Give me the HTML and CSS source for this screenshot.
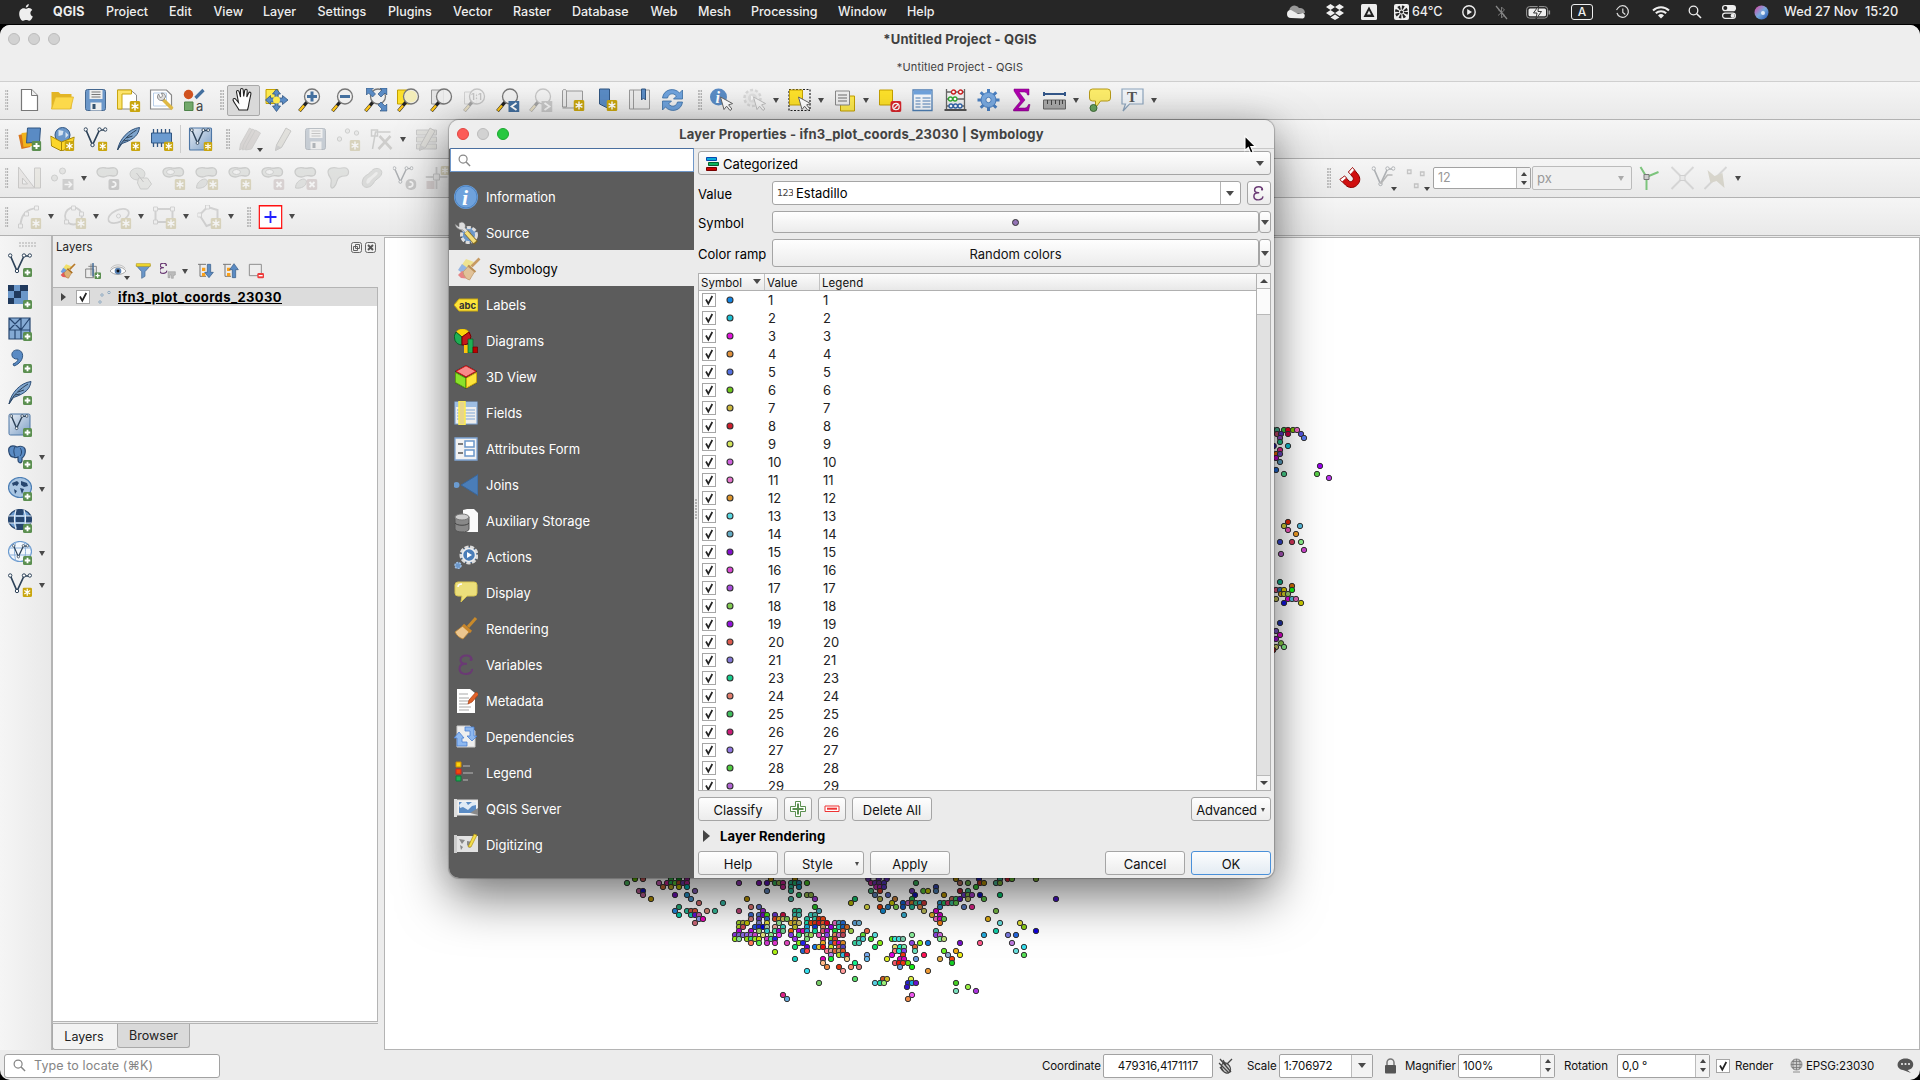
FILE: index.html
```html
<!DOCTYPE html>
<html lang="en">
<head>
<meta charset="utf-8">
<title>*Untitled Project - QGIS</title>
<link rel="stylesheet" href="styles.css">
</head>
<body>
<svg class="defs" width="0" height="0">
<defs>
<linearGradient id="gb" x1="0" y1="0" x2="1" y2="1"><stop offset="0" stop-color="#e8eef5"/><stop offset="1" stop-color="#7d9fc6"/></linearGradient>
<linearGradient id="gs" x1="0" y1="0" x2="1" y2="1"><stop offset="0" stop-color="#e040a0"/><stop offset=".5" stop-color="#7ad"/><stop offset="1" stop-color="#2050b0"/></linearGradient>
<symbol id="plus" viewBox="0 0 9 9"><rect width="9" height="9" rx="1.5" fill="#5b8f50"/><path d="M4.5 1.7v5.6M1.7 4.5h5.6" stroke="#fff" stroke-width="1.8"/></symbol>
<symbol id="star" viewBox="0 0 9 9"><rect width="9" height="9" rx="1.5" fill="#c9a60f"/><path d="M4.5 1.3v6.4M1.7 2.9l5.6 3.2M7.3 2.9L1.7 6.1" stroke="#fff" stroke-width="1.2"/></symbol>
<symbol id="lens" viewBox="0 0 24 24"><path d="M9.5 14L2 23" stroke="#222" stroke-width="3.4"/><path d="M6.5 17.5L2.2 22.7" stroke="#fcc419" stroke-width="2.4"/><circle cx="14.5" cy="8.500" r="7.500" fill="#eee" fill-opacity=".85" stroke="#777" stroke-width="1.3"/></symbol>
<symbol id="blob" viewBox="0 0 24 24"><path d="M1.500 6c0-4 5-5 9-4 3 1 6-1 9 0 4 2 3 8-1 8-3 0-4-1-7 0C8 12 2 11 1.500 6z" fill="#c0c6bd" stroke="#858b84" stroke-width="1.300"/></symbol>
<symbol id="vee" viewBox="0 0 24 24"><path d="M2.500 3L9 18 16 3h5" fill="none" stroke="#2d4258" stroke-width="1.700"/><g fill="#fff" stroke="#2d4258" stroke-width="1"><circle cx="2.200" cy="2.500" r="1.700"/><circle cx="9" cy="18" r="1.700"/><circle cx="16" cy="2.500" r="1.700"/><circle cx="21.800" cy="2.500" r="1.700"/></g></symbol>
<symbol id="arrow" viewBox="0 0 24 24"><path d="M11 9l3.500 12.500 2.600-3.300 3.400 4.300 1.900-1.500-3.300-4.200 4-1.200z" fill="#fff" stroke="#666" stroke-width="1"/></symbol>
<symbol id="eps" viewBox="0 0 24 24"><path d="M17.500 7c.3-3-2-4.500-5-4.500-4 0-6 2-6 4.500 0 2.300 2 3.800 5 3.800h1.500M13 10.800h-1.500c-4 0-6 2.200-6 5 0 3.200 2.500 5.200 6.500 5.200 3.500 0 6.500-2 6-5" fill="none" stroke="#6a3a74" stroke-width="2.100"/><circle cx="17" cy="6.500" r="1.500" fill="#6a3a74"/></symbol>
<symbol id="feather" viewBox="0 0 24 24"><path d="M1 23C3 12 12 2 23 .5 22 7 19 12 5.500 16.500z" fill="#7fa5cd" stroke="#2d4f78"/><path d="M1 23C5 14 12 8 20 3M7 14l5-1M10 11l6-2" stroke="#2d4258" fill="none"/></symbol>
<symbol id="brush" viewBox="0 0 24 24"><path d="M22.500 1.500l-8 8" stroke="#b87a2a" stroke-width="2.600"/><path d="M6 15l6-6.500 6 5.500-5.500 9C9 22 7 19 6 15z" fill="#ddb276" stroke="#b07a35" stroke-width=".8"/><path d="M11 8.500l7.500 6.500" stroke="#a66a1c" stroke-width="2"/></symbol>
<symbol id="pencil" viewBox="0 0 24 24"><path d="M6 18L15.500 1l5 3L11 20.500 5 23.500z" fill="#c9c5a8" stroke="#7d7b73"/><path d="M6 18l5 2.500-6 3z" fill="#999"/></symbol>
<symbol id="check" viewBox="0 0 14 14"><rect x=".5" y=".5" width="13" height="13" fill="#fff" stroke="#a6a6a6"/><path d="M4 6.500l2.300 4.200L10.300 3" fill="none" stroke="#222" stroke-width="1.700"/></symbol>
<symbol id="mag" viewBox="0 0 14 14"><circle cx="5.500" cy="5.500" r="4.300" fill="none" stroke="currentColor" stroke-width="1.300"/><path d="M8.700 8.700L13 13" stroke="currentColor" stroke-width="1.600"/></symbol>

<symbol id="new" viewBox="0 0 24 24"><path d="M4 1.500h10l6 6v15H4z" fill="#fff" stroke="#777" stroke-width="1.200"/><path d="M14 1.500v6h6" fill="#eee" stroke="#777"/></symbol>
<symbol id="open" viewBox="0 0 24 24"><path d="M1 21V4h7l2 2h11v15z" fill="#e3b524"/><path d="M1 21L5 9h18l-3 12z" fill="#fcd94b" stroke="#e0b52a" stroke-width=".8"/></symbol>
<symbol id="save" viewBox="0 0 24 24"><rect x="2" y="1.500" width="20" height="21" rx="2" fill="#6b97c9" stroke="#44678f"/><path d="M6 2h13v9H6z" fill="#eee"/><path d="M8 4h9M8 6.500h9M8 9h9" stroke="#777"/><path d="M7 14.500h11v8H7z" fill="#eee"/><path d="M9 16h3v5H9z" fill="#34526e"/></symbol>
<symbol id="layout" viewBox="0 0 24 24"><path d="M1 2h13l6 5v14H1z" fill="#fff" stroke="#888"/><path d="M1 2h14v4H5.500v15H1z" fill="#fce36a" stroke="#c9a60f"/><use href="#star" x="13" y="13" width="11" height="11"/></symbol>
<symbol id="lman" viewBox="0 0 24 24"><path d="M1 2h16l5 5v14H1z" fill="#fff" stroke="#888" stroke-width="1.200"/><path d="M4 5h13v13H4z" fill="none" stroke="#b9cfe8"/><path d="M13 11l10 10" stroke="#dfb944" stroke-width="3.600"/><path d="M9 6c-3 4 1 8 5 6l2-3c0-2-1-4-4-4l1 3-2 2z" fill="#ddd" stroke="#777" stroke-width=".8"/></symbol>
<symbol id="sman" viewBox="0 0 24 24"><circle cx="6" cy="6.500" r="4.700" fill="#d0521f"/><path d="M13 10L21 2" stroke="#44709f" stroke-width="3.200"/><path d="M2 14h8.500v8.500H2z" fill="#72a86b" stroke="#4d8348"/><text x="13.500" y="22.500" font-size="13" font-family="Inter" fill="#444">a</text></symbol>
<symbol id="hand" viewBox="0 0 24 24"><path d="M8 22C6 18 3 15 2 12c0-2 2-2 3-.5l2.500 3L5.500 4c0-2 2.200-2 2.700 0L9.500 9V2c0-2 2.500-2 2.700 0l.5 6.500 1-6c.5-2 2.600-1.500 2.500.5L15.800 9l1.800-4c1-1.500 2.700-.7 2.300 1L18 15c-.3 3-.7 4-1.500 7z" fill="#fff" stroke="#222" stroke-width="1.100"/></symbol>
<symbol id="pansel" viewBox="0 0 24 24"><path d="M1.500 1.500h12v14h-12z" fill="#fce94f" stroke="#c4a000"/><path d="M12 1l4 5h-2.500v4H18V7.500L23.500 12 18 16.500V14h-4.500v4H16l-4 5.500L8 18h2.500v-4H6v2.500L1 12l5-4.500V10h4.500V6H8z" fill="#5a8bc4" stroke="#315682" stroke-width=".8"/><circle cx="12" cy="12" r="3.500" fill="#fce94f"/></symbol>
<symbol id="zin" viewBox="0 0 24 24"><use href="#lens"/><path d="M14.500 3.500v10M9.500 8.500h10" stroke="#44709f" stroke-width="3"/></symbol>
<symbol id="zout" viewBox="0 0 24 24"><use href="#lens"/><path d="M9.500 8.500h10" stroke="#44709f" stroke-width="3"/></symbol>
<symbol id="zfull" viewBox="0 0 24 24"><use href="#lens"/><path d="M3 0h7L8 2l4 4-3 3-4-4-2 2zM23.500 0h-7l2 2-4 4 3 3 4-4 2 2zM23.500 23h-7l2-2-4-4 3-3 4 4 2-2z" fill="#5a8bc4" stroke="#315682" stroke-width=".7"/></symbol>
<symbol id="zsel" viewBox="0 0 24 24"><path d="M1 2h12v14H1z" fill="#fce02a" stroke="#c4a000"/><use href="#lens"/><circle cx="14.500" cy="8.500" r="6" fill="#f3edb9"/></symbol>
<symbol id="zlay" viewBox="0 0 24 24"><path d="M2 2h12v14H2z" fill="#e5e5e5" stroke="#999"/><use href="#lens"/></symbol>
<symbol id="znat" viewBox="0 0 24 24"><path d="M2 4h12v12H2z" fill="#eee" stroke="#999"/><use href="#lens"/><text x="8.500" y="12" font-size="9" font-weight="700" font-family="Inter" fill="#777">1:1</text></symbol>
<symbol id="zlast" viewBox="0 0 24 24"><use href="#lens"/><path d="M13 13h11v11H13z" fill="#44709f"/><path d="M21 15l-5 3.500 5 3.500" fill="none" stroke="#fff" stroke-width="1.800"/></symbol>
<symbol id="znext" viewBox="0 0 24 24"><use href="#lens"/><path d="M13 13h11v11H13z" fill="#888"/><path d="M16 15l5 3.500-5 3.500" fill="none" stroke="#fff" stroke-width="1.800"/></symbol>
<symbol id="mapv" viewBox="0 0 24 24"><path d="M1 3c0-2 4-2 4 0v16H1zM5 3h16v17H1" fill="#e9e9e9" stroke="#999"/><use href="#star" x="12" y="12" width="11" height="11"/></symbol>
<symbol id="bmk" viewBox="0 0 24 24"><path d="M5 1h10v20l-10-5z" fill="#5a8bc4" stroke="#315682"/><use href="#star" x="12" y="12" width="11" height="11"/></symbol>
<symbol id="book" viewBox="0 0 24 24"><path d="M2 2h20v19H2z" fill="#e9e9e9" stroke="#999"/><path d="M6 2v19" stroke="#999"/><path d="M14 1h4v11l-2-2-2 2z" fill="#5a8bc4" stroke="#315682"/></symbol>
<symbol id="refresh" viewBox="0 0 24 24"><path d="M2 10C3 1 14-1 19 5l3-3v9h-9l3-3c-4-4-8-2-9 2zM22 14c-1 9-12 11-17 5l-3 3v-9h9l-3 3c4 4 8 2 9-2z" fill="#6fa2dc" stroke="#3a6ea5" stroke-width=".8"/></symbol>
<symbol id="ident" viewBox="0 0 24 24"><circle cx="9" cy="9" r="8.500" fill="#5a8bc4"/><text x="6" y="15" font-size="16" font-style="italic" font-weight="700" font-family="Liberation Serif" fill="#fff">i</text><use href="#arrow"/></symbol>
<symbol id="gearg" viewBox="0 0 24 24"><circle cx="10" cy="10" r="8" fill="#e2e2e2" stroke="#aaa" stroke-width="2.500" stroke-dasharray="3 2"/><circle cx="10" cy="10" r="4.500" fill="#bbb"/><path d="M8.500 7.500v5l4-2.500z" fill="#fff"/><use href="#arrow"/></symbol>
<symbol id="select" viewBox="0 0 24 24"><path d="M1.500 1.500h21v21h-21z" fill="none" stroke="#222" stroke-width="1.200" stroke-dasharray="2 1.500"/><path d="M2 2h13v15H2z" fill="#fce02a" stroke="#c4a000"/><use href="#arrow"/></symbol>
<symbol id="selval" viewBox="0 0 24 24"><path d="M8 8h14v15H8z" fill="#fce94f" stroke="#c4a000"/><path d="M3 3h14v14H3z" fill="#eee" stroke="#888"/><path d="M5.500 7h9M5.500 10h9M5.500 13h9" stroke="#999" stroke-width="1.300"/></symbol>
<symbol id="desel" viewBox="0 0 24 24"><path d="M2 2h13v15H2z" fill="#fce02a" stroke="#c4a000"/><rect x="13" y="13" width="11" height="11" rx="2" fill="#d9272d"/><circle cx="18.500" cy="18.500" r="3.200" fill="none" stroke="#fff" stroke-width="1.300"/><path d="M16.500 20.500l4-4" stroke="#fff" stroke-width="1.300"/></symbol>
<symbol id="table" viewBox="0 0 24 24"><path d="M2.500 2h19v20.500h-19z" fill="#f5f8fc" stroke="#4f7fb5" stroke-width="1.300"/><path d="M3 2.500h18v4H3z" fill="#6fa2dc"/><path d="M5 10h5M12 10h8M5 13h5M12 13h8M5 16h5M12 16h8M5 19h5M12 19h8" stroke="#4f7fb5" stroke-width="1.200"/></symbol>
<symbol id="abacus" viewBox="0 0 24 24"><path d="M3 1v21M21 1v21M3 4h18M3 11h18M3 18h18" stroke="#666" stroke-width="1.300"/><path d="M1 22h22" stroke="#555" stroke-width="2.200"/><g stroke-width="1.300" fill="#fff"><g stroke="#c22"><circle cx="10" cy="4" r="2"/><circle cx="17" cy="4" r="2"/></g><g stroke="#3a3"><circle cx="7" cy="11" r="2"/><circle cx="11.500" cy="11" r="2"/></g><g stroke="#36a"><circle cx="7.500" cy="18" r="2"/><circle cx="12" cy="18" r="2"/><circle cx="16.500" cy="18" r="2"/></g></g></symbol>
<symbol id="gear" viewBox="0 0 24 24"><g stroke="#4a7fc0" stroke-width="3"><path d="M12 1v22M1 12h22M4.200 4.200l15.600 15.600M19.800 4.200L4.200 19.800"/></g><circle cx="12" cy="12" r="7.500" fill="#7aa9df" stroke="#4a7fc0"/><circle cx="12" cy="12" r="2.700" fill="#f2f2f2" stroke="#4a7fc0"/></symbol>
<symbol id="sigma" viewBox="0 0 24 24"><path d="M4.500 1h15v6H18c-.5-2.500-2-3-4-3H9.500l6 8-7 8H15c2 0 3-1 4-3.500h1.500L19 23H4v-1.500L11 13 4.500 3z" fill="#b000b0" stroke="#700070" stroke-width=".5"/></symbol>
<symbol id="measure" viewBox="0 0 24 24"><path d="M1.500 6h21M1.500 4v4M22.500 4v4" stroke="#34588a" stroke-width="2"/><path d="M1 12h22v9H1z" fill="#aaa" stroke="#666"/><path d="M5 12v4M9 12v5M13 12v4M17 12v5M20 12v4" stroke="#444"/></symbol>
<symbol id="tip" viewBox="0 0 24 24"><path d="M5 1h15q3 0 3 3v6q0 3-3 3h-7l-5 7v-7H5q-3 0-3-3V4q0-3 3-3z" fill="#fcec6a" stroke="#b79b1b"/><circle cx="6" cy="20" r="3.500" fill="#6aa460" stroke="#3f6d38"/></symbol>
<symbol id="tann" viewBox="0 0 24 24"><path d="M1.500 1h21v15H9l-6.500 7L5 16H1.500z" fill="#eff3f7" stroke="#8da5bd" stroke-width="1.200"/><text x="6.500" y="14" font-size="15" font-weight="700" font-family="Liberation Serif" fill="#555">T</text></symbol>

<symbol id="dsrc" viewBox="0 0 24 24"><path d="M1 8l9-2 3 14-9 2z" fill="#d9761c"/><path d="M4 6l10-1 1 14-9 1z" fill="#f1b41d"/><path d="M10 1h13l-1 14-13 1z" fill="#5a8bc4" stroke="#315682"/><use href="#plus" x="14" y="14" width="10" height="10"/></symbol>
<symbol id="gpkg" viewBox="0 0 24 24"><circle cx="12" cy="8" r="7.500" fill="#6b97c9" stroke="#315682"/><path d="M8 3l5 1-1 4-4 1zM15 5l3 3-3 3z" fill="#d5e3f1"/><path d="M0 9l11 6 13-5-2 10-11 4-10-5z" fill="#fcd62a" stroke="#a5850a"/><path d="M11 15v9" stroke="#a5850a"/><use href="#star" x="14" y="14" width="10" height="10"/></symbol>
<symbol id="shp" viewBox="0 0 24 24"><use href="#vee"/><use href="#star" x="14.500" y="14.500" width="9.500" height="9.500"/></symbol>
<symbol id="spl" viewBox="0 0 24 24"><use href="#feather"/><use href="#star" x="14.500" y="14.500" width="9.500" height="9.500"/></symbol>
<symbol id="mem" viewBox="0 0 24 24"><path d="M4 2v18M8 2v18M12 2v18M16 2v18M20 2v18" stroke="#315682" stroke-width="1.300"/><path d="M2 6h20v10H2z" fill="#6b9bd0" stroke="#315682"/><use href="#star" x="14.500" y="14.500" width="9.500" height="9.500"/></symbol>
<symbol id="virt" viewBox="0 0 24 24"><rect x="1" y="1" width="22" height="22" rx="1" fill="url(#gb)" stroke="#4d76a5" stroke-width="1.200"/><use href="#vee" x="1.500" y="1" width="20" height="20"/><use href="#star" x="15" y="15" width="9" height="9"/></symbol>
<symbol id="edits" viewBox="0 0 24 24"><g fill="#b9a59c" stroke="#8d8a82" stroke-width=".8"><path d="M3 17L12 1l5 3L8 20l-6 3z"/><path d="M6 18L15 2l5 3-9 16-6 2z"/><path d="M9 19l9-16 5 3-9 16-6 1z"/></g></symbol>
<symbol id="points" viewBox="0 0 24 24"><g fill="#d8dbd7" stroke="#8d938c"><circle cx="3" cy="12" r="2.200"/><circle cx="11" cy="4" r="2.200"/><circle cx="20" cy="6" r="2.200"/></g><use href="#star" x="13" y="13" width="11" height="11"/></symbol>
<symbol id="vertex" viewBox="0 0 24 24"><path d="M3 22L6 5h15M2 3h6v6H2z" fill="none" stroke="#8d938c" stroke-width="1.500"/><path d="M9 22L21 9M10 9l12 13" stroke="#9a958a" stroke-width="2.600"/></symbol>
<symbol id="multi" viewBox="0 0 24 24"><path d="M2 3h20v5H2zM2 10h20v5H2zM2 17h20v5H2z" fill="#c8c8b0" stroke="#888"/><use href="#pencil"/></symbol>
<symbol id="rulr" viewBox="0 0 24 24"><path d="M1 1l16 21H1z" fill="#ddd3cb" stroke="#8d8680"/><path d="M5 12v6h5z" fill="#eee" stroke="#8d8680"/><path d="M17 2h6v20h-6z" fill="#ddd9b8" stroke="#8d8680"/></symbol>
<symbol id="movef" viewBox="0 0 24 24"><g fill="#c9cdc6" stroke="#8d938c"><circle cx="4" cy="12" r="3"/><circle cx="12" cy="5" r="3"/></g><path d="M12 13h11v11H12z" fill="#999"/><path d="M14 18.500h6M18 15.500l3 3-3 3" stroke="#fff" stroke-width="1.500" fill="none"/></symbol>
<symbol id="bl1" viewBox="0 0 24 24"><use href="#blob"/><rect x="13" y="13" width="11" height="11" rx="2" fill="#888"/><path d="M16 21c6 0 5-6 1-5" stroke="#fff" stroke-width="1.800" fill="none"/></symbol>
<symbol id="bl2" viewBox="0 0 24 24"><ellipse cx="9" cy="8" rx="7.500" ry="6" fill="#c0c6bd" stroke="#8d938c"/><path d="M10 12h9l4 6-4 5h-7l-3-6z" fill="#d4d6c6" stroke="#8d938c"/><path d="M8 7l7 9" stroke="#777"/></symbol>
<symbol id="bl3" viewBox="0 0 24 24"><use href="#blob"/><ellipse cx="9" cy="6" rx="4" ry="2.500" fill="#eee" stroke="#8d938c"/><use href="#star" x="13" y="13" width="11" height="11"/></symbol>
<symbol id="bl4" viewBox="0 0 24 24"><use href="#blob"/><path d="M2 22c0-5 4-9 9-9l2 2c0 5-5 8-11 7z" fill="#c0c6bd" stroke="#8d938c"/><use href="#star" x="13" y="13" width="11" height="11"/></symbol>
<symbol id="bl5" viewBox="0 0 24 24"><use href="#blob"/><ellipse cx="9" cy="6" rx="4" ry="2.500" fill="#eee" stroke="#8d938c"/><rect x="13" y="13" width="11" height="11" rx="2" fill="#c99a9a"/><path d="M16 16l5 5M21 16l-5 5" stroke="#fff" stroke-width="1.800"/></symbol>
<symbol id="bl6" viewBox="0 0 24 24"><use href="#blob"/><path d="M2 22c0-5 4-9 9-9l2 2c0 5-5 8-11 7z" fill="#c0c6bd" stroke="#8d938c"/><rect x="13" y="13" width="11" height="11" rx="2" fill="#c99a9a"/><path d="M16 16l5 5M21 16l-5 5" stroke="#fff" stroke-width="1.800"/></symbol>
<symbol id="bl7" viewBox="0 0 24 24"><path d="M1.500 6c0-4 5-5 9-4 3 1 6-1 9 0 4 2 3 8-1 8-4 0-7 1-8 5-1 5-5 9-6 6-1-2 1-5 0-8-1-2-3-4-3-7z" fill="#c0c6bd" stroke="#8d938c" stroke-width="1.200"/></symbol>
<symbol id="bl8" viewBox="0 0 24 24"><path d="M3 15c1-6 5-5 9-10 4-5 12-2 10 3-1 4-5 4-8 9-4 7-13 5-11-2z" fill="#b5bab2" stroke="#8d938c"/><path d="M7 15c1-4 4-3 8-8 2-2 4-1 3 1-2 3-4 3-7 7-2 4-5 3-4 0z" fill="#e4e6df"/></symbol>
<symbol id="bl9" viewBox="0 0 24 24"><use href="#vee" width="21" height="21"/><rect x="13" y="13" width="11" height="11" rx="5" fill="#888"/><path d="M16 21c6 0 5-6 1-5" stroke="#fff" stroke-width="1.800" fill="none"/></symbol>
<symbol id="bl10" viewBox="0 0 24 24"><path d="M0 11h22M11 1v22" stroke="#999" stroke-width="1.800"/><path d="M8 8h6v6H8z" fill="#ddd" stroke="#888"/><use href="#star" x="15" y="0" width="9" height="9"/><rect x="1" y="15" width="8" height="8" fill="#c99a9a"/></symbol>
<symbol id="s1" viewBox="0 0 24 24"><path d="M3 22C3 10 8 4 20 3" fill="none" stroke="#9a9a9a" stroke-width="2"/><path d="M7 7h4v4H7zM17 1h4v4h-4zM1 19h4v4H1z" fill="#eee" stroke="#999"/><use href="#star" x="13" y="13" width="11" height="11"/></symbol>
<symbol id="s2" viewBox="0 0 24 24"><circle cx="11" cy="11" r="8.500" fill="#eee" stroke="#9a9a9a" stroke-width="1.800"/><path d="M9 1h4v4H9zM2 15h4v4H2zM17 7h4v4h-4z" fill="#eee" stroke="#999"/><use href="#star" x="13" y="13" width="11" height="11"/></symbol>
<symbol id="s3" viewBox="0 0 24 24"><ellipse cx="11" cy="11" rx="11" ry="6" transform="rotate(-25 11 11)" fill="#eee" stroke="#9a9a9a" stroke-width="1.800"/><circle cx="11" cy="11" r="2" fill="#eee" stroke="#999"/><use href="#star" x="13" y="13" width="11" height="11"/></symbol>
<symbol id="s4" viewBox="0 0 24 24"><path d="M3 4h17v13H3z" fill="#eee" stroke="#9a9a9a" stroke-width="2"/><path d="M1 2h4v4H1zM18 2h4v4h-4zM1 15h4v4H1z" fill="#eee" stroke="#999"/><use href="#star" x="13" y="13" width="11" height="11"/></symbol>
<symbol id="s5" viewBox="0 0 24 24"><path d="M2 10l8-8 10 3v12l-11 4z" fill="#eee" stroke="#9a9a9a" stroke-width="2"/><path d="M8 0h4v4H8zM0 8h4v4H0z" fill="#eee" stroke="#999"/><use href="#star" x="13" y="13" width="11" height="11"/></symbol>
<symbol id="redx" viewBox="0 0 24 24"><path d="M.7.700h22.600v22.600H.7z" fill="#fff" stroke="#f11" stroke-width="1.500"/><path d="M12 6v12M6 12h12" stroke="#22f" stroke-width="1.800"/></symbol>
<symbol id="magnet" viewBox="0 0 24 24"><path d="M1.500 13.500L6 10l4.500 5c2 2 5.500-1 4-3.500L10 6l4-4.500 6 7.500c5 8-6 17-13 10z" fill="#d01010" stroke="#800"/><path d="M1.500 13.500L6 10l2 2-4.500 4zM10 6l4-4.500 2 2.500-4 4.500z" fill="#fff" stroke="#a22" stroke-width=".8"/></symbol>
<symbol id="veeg" viewBox="0 0 24 24"><use href="#vee" width="24" height="24"/><path d="M9 18L16 9h5" stroke="#555" fill="none" stroke-width="1.500"/></symbol>
<symbol id="pts3" viewBox="0 0 24 24"><g fill="#eee" stroke="#777" stroke-width="1.300"><path d="M3 4h3.500v3.500H3zM16 6h3.500v3.500H16zM10 18h3.500v3.500H10z"/></g></symbol>
<symbol id="topo" viewBox="0 0 24 24"><path d="M3 1l6 10 12-5M9 11v13" fill="none" stroke="#7cc47c" stroke-width="2"/><path d="M6.500 8.500h5v5h-5z" fill="#ccc" stroke="#777"/></symbol>
<symbol id="cross" viewBox="0 0 24 24"><path d="M1 1l22 22M23 1L1 23" stroke="#aaa" stroke-width="2"/><path d="M9.500 9.500h5v5h-5z" fill="#ddd" stroke="#999"/></symbol>
<symbol id="trace" viewBox="0 0 24 24"><path d="M23 1L1 23" stroke="#aaa" stroke-width="2"/><path d="M4 4l7 6 8-3 2 15-8-7-6 2z" fill="#b6a868"/></symbol>

<symbol id="lv" viewBox="0 0 24 24"><use href="#vee"/><use href="#plus" x="15" y="15" width="9" height="9"/></symbol>
<symbol id="lr" viewBox="0 0 24 24"><path d="M0 0h20v19H0z" fill="#6b97c9"/><path d="M0 0h6v6H0zM12 0h8v6h-8zM6 6h7v7H6zM0 13h6v6H0z" fill="#20395c"/><use href="#plus" x="15" y="15" width="9" height="9"/></symbol>
<symbol id="lm" viewBox="0 0 24 24"><path d="M1 1h21v21H1zM1 13h21M13 1v12M7 13v9M13 13v9M1 1l12 12M13 1L1 13M22 1l-9 12" fill="#84aad4" stroke="#27466f" stroke-width="1.200"/><use href="#plus" x="15" y="15" width="9" height="9"/></symbol>
<symbol id="lc" viewBox="0 0 24 24"><path d="M9 1c8 0 8 12-3 16l-1-2c3-1 5-3 5-5-8 1-8-9-1-9z" fill="#5a8bc4" stroke="#315682"/><use href="#plus" x="15" y="15" width="9" height="9"/></symbol>
<symbol id="lf" viewBox="0 0 24 24"><use href="#feather"/><use href="#plus" x="15" y="15" width="9" height="9"/></symbol>
<symbol id="lx" viewBox="0 0 24 24"><rect x="1" y="1" width="21" height="21" rx="1.500" fill="url(#gb)" stroke="#4d76a5"/><use href="#vee" x="1.500" y="1" width="19" height="19"/><use href="#plus" x="15" y="15" width="9" height="9"/></symbol>
<symbol id="lp" viewBox="0 0 24 24"><path d="M1 3c2-3 6-2 8-1 3-1 7-1 8 2 1 4-1 8-3 9v3c-1 3-4 2-4-1v-3c-2 1-3 1-4 0-4 1-6-5-5-9z" fill="#5a8bc4" stroke="#27466f" stroke-width="1.200"/><path d="M7 2c-2 3-1 7 0 9M12 3c2 2 2 6 0 8" stroke="#27466f" fill="none"/><use href="#plus" x="15" y="15" width="9" height="9"/></symbol>
<symbol id="lw" viewBox="0 0 24 24"><ellipse cx="12" cy="10.500" rx="11.500" ry="10" fill="#a9c6e3" stroke="#4d7fb5" stroke-width="1.200"/><path d="M4 6l5-2 2 2-2 3-2-1-2 1zM13 4l6 2 1 3-4 1-3-2zM12 11l4 1-2 5zM6 12l3 2-2 3z" fill="#27466f"/><use href="#plus" x="15" y="15" width="9" height="9"/></symbol>
<symbol id="lg" viewBox="0 0 24 24"><ellipse cx="12" cy="10.500" rx="11.500" ry="10" fill="#6b9bd0" stroke="#27466f" stroke-width="1.200"/><path d="M1 7h6v7H1zM17 7h6v7h-6zM8 1h8l-1 5H8zM8 15h8l-1 5H9z" fill="#27466f"/><path d="M8 8h8v5H8z" fill="#27466f"/><path d="M1 7h22M1 14h22M8 1c-2 6-2 13 0 19M16 1c2 6 2 13 0 19" fill="none" stroke="#e2ecf6" stroke-width="1.200"/><use href="#plus" x="15" y="15" width="9" height="9"/></symbol>
<symbol id="lh" viewBox="0 0 24 24"><ellipse cx="12" cy="10.500" rx="11.500" ry="10" fill="#f4f8fc" stroke="#6b9bd0" stroke-width="1.200"/><path d="M1 7h22M1 14h22M8 1c-2 6-2 13 0 19M16 1c2 6 2 13 0 19" fill="none" stroke="#8db1da"/><use href="#vee" x="4" y="3" width="17" height="17"/><use href="#plus" x="15" y="15" width="9" height="9"/></symbol>

<symbol id="style" viewBox="0 0 24 24"><path d="M4 9l5-7 8 3-6 8z" fill="#f1e06a"/><path d="M1 13l4-6 7 5-4 6z" fill="#6f9fe0"/><path d="M1 18l4-4 6 2 3 6-10-1z" fill="#e4595a"/><use href="#brush"/></symbol>
<symbol id="addg" viewBox="0 0 24 24"><path d="M1 9h12v13H1zM5 5h12v13M9 1v18M12 1v20" fill="none" stroke="#777" stroke-width="1.300"/><path d="M12 0v20" stroke="#44709f" stroke-width="2"/><use href="#plus" x="14" y="14" width="10" height="10"/></symbol>
<symbol id="eye" viewBox="0 0 24 24"><path d="M0 12C6 4 18 4 24 12 18 19 6 19 0 12z" fill="#fff" stroke="#999" stroke-width="1.300"/><circle cx="12" cy="12" r="5" fill="#5a83b5"/><circle cx="12" cy="12" r="2.200" fill="#111"/><path d="M1 8C7 1 17 1 23 8" fill="none" stroke="#aaa"/></symbol>
<symbol id="funnel" viewBox="0 0 24 24"><path d="M2 4l8 9v10l5-3v-7l8-9z" fill="#6b97c9" stroke="#44678f"/><path d="M2 1h21v4H2z" fill="#f3dc30" stroke="#b79b1b"/></symbol>
<symbol id="epsf" viewBox="0 0 24 24"><use href="#eps" x="-5" y="-2" width="20" height="20"/><path d="M12 13h11v5l-3 1v4h-3v-5l-2 0v4h-3z" fill="#bbb" stroke="#888" stroke-width=".6"/></symbol>
<symbol id="expa" viewBox="0 0 24 24"><path d="M0 2h12M3 2v18h9" stroke="#777" stroke-width="1.500" fill="none"/><path d="M6 7h5v5H6zM6 15h5v5H6z" fill="#f9a01b"/><path d="M14 2h5v12h4l-6.500 8L10 14h4z" fill="#5a8bc4" stroke="#315682"/></symbol>
<symbol id="coll" viewBox="0 0 24 24"><path d="M0 2h12M3 2v18h9" stroke="#777" stroke-width="1.500" fill="none"/><path d="M6 7h5v5H6zM6 15h5v5H6z" fill="#f9a01b"/><path d="M14 22h5V10h4l-6.500-9L10 10h4z" fill="#5a8bc4" stroke="#315682"/></symbol>
<symbol id="remv" viewBox="0 0 24 24"><path d="M2 2h18v17H2z" fill="#eee" stroke="#888" stroke-width="1.400"/><rect x="14" y="15" width="10" height="8" rx="2" fill="#ee3b3b"/><path d="M16 19h6" stroke="#fff" stroke-width="2"/></symbol>

<symbol id="d1" viewBox="0 0 24 24"><circle cx="12" cy="12" r="12" fill="#6fa2dc"/><circle cx="12" cy="12" r="11" fill="none" stroke="#4d84c4"/><text x="8" y="20" font-size="22" font-style="italic" font-weight="700" font-family="Liberation Serif" fill="#fff">i</text></symbol>
<symbol id="d2" viewBox="0 0 24 24"><circle cx="15" cy="14" r="7.500" fill="#6b97c9" stroke="#ddd" stroke-width="3" stroke-dasharray="4 1.500"/><path d="M1 3l4 3V2L8 1c3 1 4 3 3 6l6 5-3 3-5-6c-4 0-7-2-8-6z" fill="#ddd" stroke="#777" stroke-width=".6"/><path d="M12 11l10 11" stroke="#7c6420" stroke-width="5"/><path d="M12 11l9 10" stroke="#f3dd7a" stroke-width="3.800"/></symbol>
<symbol id="d4" viewBox="0 0 24 24"><path d="M0 12l5-6h19v12H5z" fill="#fce43a" stroke="#c9a60f"/><text x="5" y="15.500" font-size="9.500" font-weight="700" font-family="Inter" fill="#333">abc</text></symbol>
<symbol id="d5" viewBox="0 0 24 24"><path d="M8 8L2 3a8 8 0 0113 0z" fill="#fcd40a" stroke="#a5850a" stroke-width=".6"/><path d="M8 8v8A8 8 0 012 3z" fill="#1fae54" stroke="#0a5c28"/><path d="M8 8l7-5a8 8 0 01-7 13z" fill="#c4181c" stroke="#700"/><path d="M10 16h4v8h-4z" fill="#fcc40a"/><path d="M14 10h5v14h-5z" fill="#1fae54" stroke="#0a5c28" stroke-width=".7"/><path d="M19 18h4.500v6H19z" fill="#b00" stroke="#600" stroke-width=".7"/></symbol>
<symbol id="d6" viewBox="0 0 24 24"><path d="M12 0l11 6v12l-11 6-11-6V6z" fill="#333"/><path d="M12 .8l10 5.500-10 5.500L2 6.300z" fill="#f88a8a" stroke="#d01515"/><path d="M1.500 7.500L11.500 13v10L1.500 17.500z" fill="#8ae22a" stroke="#58a010"/><path d="M22.500 7.500L12.500 13v10l10-5.500z" fill="#fce43a" stroke="#c9a60f"/></symbol>
<symbol id="d7" viewBox="0 0 24 24"><path d="M1 1h22v22H1z" fill="#eee" stroke="#7fa5d5" stroke-width="1.200"/><path d="M1 1h22v5H1z" fill="#9dbde2"/><path d="M3 9h18M3 12h18M3 15h18M3 18h18" stroke="#7fa5d5" stroke-width="1.200"/><path d="M5 0h6v24H5z" fill="#e8d68a" stroke="#fcec4f" stroke-width="1.500"/></symbol>
<symbol id="d8" viewBox="0 0 24 24"><path d="M1 1h22v22H1z" fill="#f2f2f2" stroke="#7fa5d5" stroke-width="1.300"/><path d="M11 4h9v6h-9zM11 13h9v6h-9z" fill="#fff" stroke="#6b97c9" stroke-width="1.500"/><path d="M4 7h5M4 16h5" stroke="#555" stroke-width="1.700"/></symbol>
<symbol id="d9" viewBox="0 0 24 24"><circle cx="2.500" cy="12" r="3" fill="#6b9bd0"/><path d="M24 1.500v21L7 12z" fill="#4a7db8" stroke="#3a6698"/></symbol>
<symbol id="d10" viewBox="0 0 24 24"><path d="M9 1l4-1h7l4 4v19H9z" fill="#fafafa"/><path d="M1 8v12c0 4 14 4 14 0V8z" fill="#888" stroke="#555"/><ellipse cx="8" cy="8" rx="7" ry="3" fill="#ccc" stroke="#777"/><path d="M1 14c2 3 12 3 14 0" stroke="#444" fill="none"/></symbol>
<symbol id="d11" viewBox="0 0 24 24"><circle cx="15" cy="10" r="8" fill="#4a7db8" stroke="#ddd" stroke-width="3" stroke-dasharray="4 1.500"/><circle cx="15" cy="10" r="6.500" fill="none" stroke="#eee" stroke-width="1.500"/><path d="M13 7v6l5-3z" fill="#fff"/><circle cx="4" cy="20.500" r="3" fill="#6b97c9" stroke="#9dbde2" stroke-width="1.500" stroke-dasharray="2 1"/></symbol>
<symbol id="d12" viewBox="0 0 24 24"><path d="M4 1h16q3 0 3 3v8q0 3-3 3h-7l-6 6 1-6H4q-3 0-3-3V4q0-3 3-3z" fill="#ecdf7b" stroke="#d8c552"/><path d="M4 6q0-3 4-3" stroke="#fff" stroke-width="1.500" fill="none"/></symbol>
<symbol id="d13" viewBox="0 0 24 24"><path d="M22 1l-8 9" stroke="#c98a2a" stroke-width="3"/><path d="M1 15l9-7 6 6-7 8c-3-1-6-3-8-7z" fill="#ecc68f" stroke="#b9802f" stroke-width=".8"/><path d="M9 8l8 7" stroke="#c9862a" stroke-width="3"/></symbol>
<symbol id="d15" viewBox="0 0 24 24"><path d="M3 0h13l5 4v20H3z" fill="#fff"/><path d="M5 5h9M5 9h10M5 12h11M5 15h9M5 18h12M5 21h10" stroke="#aaa" stroke-width="1.200"/><path d="M14 15l1-4 7-8 3 2-7 8z" fill="#e0622a" stroke="#a33c10" stroke-width=".7"/></symbol>
<symbol id="d16" viewBox="0 0 24 24"><path d="M3 1h13l5 5v16H3z" fill="#eee" stroke="#ccc"/><path d="M11 2h9v9h3l-5 5-5-5h3V6h-5zM13 21H3v-8H0l5-6 5 6H8v4h5z" fill="#8db8f0" stroke="#4a7fd0" stroke-width=".8"/></symbol>
<symbol id="d17" viewBox="0 0 24 24"><path d="M2 1h5v5H2z" fill="#fcd40a" stroke="#d18a00"/><path d="M2 8h5v5H2z" fill="#f24a0a" stroke="#c22"/><path d="M2 15h5v5H2z" fill="#1fae54" stroke="#0a7a38"/><path d="M9 5h7M9 12h10M9 19h5" stroke="#999" stroke-width="1.500"/></symbol>
<symbol id="d18" viewBox="0 0 24 24"><path d="M0 2h3v18H0z" fill="#ddd"/><path d="M3 3h21v15H3z" fill="#f2f2f2" stroke="#ddd"/><path d="M5 5h17v11H5z" fill="#5a8bc4"/><path d="M8 5h4l2 3 4-3h4v3l-4 1-4 4-5-3-3 1-1-3z" fill="#dfeaf5"/><path d="M16 16l8-5v7z" fill="#888"/></symbol>
<symbol id="d19" viewBox="0 0 24 24"><path d="M0 2h3v18H0z" fill="#ccc"/><path d="M3 3h21v16H3z" fill="#e2e2e2"/><path d="M5 6l6 1-3 4zM13 8l6 1-3 6-3-3zM6 12l3 2-2 3z" fill="#888"/><path d="M14 14l6-13 3 1-6 12z" fill="#f3dd4a" stroke="#a5850a" stroke-width=".6"/></symbol>
</defs>
</svg>

<header class="menubar">
<nav class="menus">
<span class="apple"><svg width="14" height="17" viewBox="0 0 14 17"><path d="M9.800 0c.2 1.800-1.200 3.600-3 3.600C6.600 2 8 .3 9.800 0zM7 4.800c.8 0 1.500-.8 3-.8 1.300 0 2.600.8 3.300 1.900-2.800 1.600-2.300 5.300.5 6.500-.8 2.300-2.200 4.300-3.700 4.300-1.200 0-1.500-.7-2.900-.7s-1.800.7-3 .7C2 16.700.2 13 .2 9.900.2 6.400 2.300 4.200 4.500 4.200c1.200 0 2 .6 2.500.6z" fill="#eee"/></svg></span>
<b>QGIS</b><span>Project</span><span>Edit</span><span>View</span><span>Layer</span><span>Settings</span><span>Plugins</span><span>Vector</span><span>Raster</span><span>Database</span><span>Web</span><span>Mesh</span><span>Processing</span><span>Window</span><span>Help</span>
</nav>
<div class="tray">
<span><svg width="20" height="14" viewBox="0 0 20 14"><path d="M3 9a5 5 0 019-6 5 5 0 016 5z" fill="#999"/><path d="M4 13a4 4 0 010-8l7 4 5-1a3 3 0 010 5.500z" fill="#eee"/></svg></span>
<span><svg width="18" height="16" viewBox="0 0 18 16"><path d="M4.500 0L9 3 4.500 6 0 3zM13.500 0L18 3l-4.500 3L9 3zM4.500 6L9 9l-4.500 3L0 9zM13.500 6L18 9l-4.500 3L9 9zM9 10.500l4.500 3L9 16l-4.500-2.500z" fill="#eee"/></svg></span>
<span><svg width="16" height="16" viewBox="0 0 16 16"><rect width="16" height="16" rx="1.500" fill="#eee"/><path d="M8 2.500l5.500 10.500h-11zM8 6.500L6 10.500h4z" fill="#222" fill-rule="evenodd"/></svg></span>
<span class="fan"><svg width="15" height="16" viewBox="0 0 15 16"><rect width="15" height="16" rx="2" fill="#eee"/><circle cx="7.500" cy="8" r="4.500" fill="none" stroke="#222" stroke-width="4" stroke-dasharray="2 1.500"/><circle cx="7.500" cy="8" r="1.500" fill="#222"/></svg>64°C</span>
<span><svg width="14" height="14" viewBox="0 0 14 14"><circle cx="7" cy="7" r="6.200" fill="none" stroke="#eee" stroke-width="1.400"/><path d="M5.200 4v6l4.800-3z" fill="#eee"/></svg></span>
<span><svg width="13" height="15" viewBox="0 0 13 15"><path d="M3 10.500L9.500 5 6.500 2v11l3-3L3 4.500" fill="none" stroke="#777"/><path d="M1 1l11 13" stroke="#888" stroke-width="1.200"/></svg></span>
<span><svg width="25" height="13" viewBox="0 0 25 13"><rect x=".6" y=".6" width="21" height="11.500" rx="3" fill="none" stroke="#999"/><rect x="2.500" y="2.500" width="17.500" height="7.800" rx="1.500" fill="#eee"/><path d="M23.300 4.500v4" stroke="#999" stroke-width="1.600"/><path d="M12.500 0L7.500 7h3.500l-1 6 5.500-7.500H12z" fill="#eee" stroke="#222" stroke-width=".9"/></svg></span>
<span><i class="kbd">A</i></span>
<span><svg width="15" height="14" viewBox="0 0 15 14"><path d="M2 8a5.800 5.800 0 101-5L1.500 5" fill="none" stroke="#ddd" stroke-width="1.200"/><path d="M7.800 3.500V7.500l2.500 2" fill="none" stroke="#ddd" stroke-width="1.200"/></svg></span>
<span><svg width="18" height="13" viewBox="0 0 18 13"><path d="M1 4.500a11.500 11.500 0 0116 0M3.800 7.300a7.500 7.500 0 0110.400 0" fill="none" stroke="#eee" stroke-width="2"/><path d="M9 12.500L6 9.500a4.300 4.300 0 016 0z" fill="#eee"/></svg></span>
<span><svg width="14" height="14" class="lt"><use href="#mag"/></svg></span>
<span><svg width="14" height="14" viewBox="0 0 14 14"><rect width="14" height="6.300" rx="3.100" fill="#eee"/><circle cx="3.300" cy="3.100" r="2" fill="#222"/><rect x=".6" y="8.100" width="12.800" height="5.300" rx="2.600" fill="none" stroke="#eee" stroke-width="1.200"/><circle cx="10.600" cy="10.800" r="2" fill="#eee"/></svg></span>
<span><svg width="15" height="15" viewBox="0 0 15 15"><circle cx="7.500" cy="7.500" r="7" fill="url(#gs)"/><circle cx="9" cy="8" r="2" fill="#fff" opacity=".8"/></svg></span>
<span class="clock">Wed 27 Nov&nbsp; 15:20</span>
</div>
</header>

<div class="window">
<div class="titlebar"><div class="lights"><i></i><i></i><i></i></div><h1>*Untitled Project - QGIS</h1><h2>*Untitled Project - QGIS</h2></div>

<div class="bar b1"><i class="grip first"></i>
<svg class="t"><use href="#new"/></svg><svg class="t"><use href="#open"/></svg><svg class="t"><use href="#save"/></svg><svg class="t"><use href="#layout"/></svg><svg class="t"><use href="#lman"/></svg><svg class="t"><use href="#sman"/></svg><i class="grip"></i><span class="on"><svg class="big"><use href="#hand"/></svg></span><svg class="t"><use href="#pansel"/></svg><svg class="t"><use href="#zin"/></svg><svg class="t"><use href="#zout"/></svg><svg class="t"><use href="#zfull"/></svg><svg class="t"><use href="#zsel"/></svg><svg class="t"><use href="#zlay"/></svg><svg class="t off"><use href="#znat"/></svg><svg class="t"><use href="#zlast"/></svg><svg class="t off"><use href="#znext"/></svg><svg class="t"><use href="#mapv"/></svg><svg class="t"><use href="#bmk"/></svg><svg class="t"><use href="#book"/></svg><svg class="t"><use href="#refresh"/></svg><i class="grip"></i><svg class="t"><use href="#ident"/></svg><svg class="t off"><use href="#gearg"/></svg><i class="dd"></i><svg class="t"><use href="#select"/></svg><i class="dd"></i><svg class="t"><use href="#selval"/></svg><i class="dd"></i><svg class="t"><use href="#desel"/></svg><svg class="t"><use href="#table"/></svg><svg class="t"><use href="#abacus"/></svg><svg class="t"><use href="#gear"/></svg><svg class="t"><use href="#sigma"/></svg><svg class="t"><use href="#measure"/></svg><i class="dd"></i><svg class="t"><use href="#tip"/></svg><svg class="t"><use href="#tann"/></svg><i class="dd"></i></div>

<div class="bar b2"><i class="grip first"></i>
<svg class="t"><use href="#dsrc"/></svg><svg class="t"><use href="#gpkg"/></svg><svg class="t"><use href="#shp"/></svg><svg class="t"><use href="#spl"/></svg><svg class="t"><use href="#mem"/></svg><i class="sep"></i><svg class="t"><use href="#virt"/></svg><i class="grip"></i><span class="corner"><svg class="t off"><use href="#edits"/></svg></span><svg class="t off"><use href="#pencil"/></svg><svg class="t off"><use href="#save"/></svg><svg class="t off"><use href="#points"/></svg><svg class="t off"><use href="#vertex"/></svg><i class="dd"></i><svg class="t off"><use href="#multi"/></svg></div>

<div class="bar b3"><i class="grip first"></i>
<svg class="t off"><use href="#rulr"/></svg><svg class="t off"><use href="#movef"/></svg><i class="dd"></i><svg class="t off"><use href="#bl1"/></svg><svg class="t off"><use href="#bl2"/></svg><svg class="t off"><use href="#bl3"/></svg><svg class="t off"><use href="#bl4"/></svg><svg class="t off"><use href="#bl3"/></svg><svg class="t off"><use href="#bl5"/></svg><svg class="t off"><use href="#bl6"/></svg><svg class="t off"><use href="#bl7"/></svg><svg class="t off"><use href="#bl8"/></svg><svg class="t off"><use href="#bl9"/></svg><svg class="t off"><use href="#bl10"/></svg>
<div class="snap"><i class="grip"></i><svg class="t"><use href="#magnet"/></svg><span class="corner"><svg class="t off"><use href="#veeg"/></svg></span><span class="corner"><svg class="t off"><use href="#pts3"/></svg></span><span class="spin dim"><span>12</span><i class="ud"></i></span><span class="combo dim"><span>px</span><i class="dd"></i></span><svg class="t"><use href="#topo"/></svg><svg class="t off"><use href="#cross"/></svg><svg class="t off"><use href="#trace"/></svg><i class="dd"></i></div></div>

<div class="bar b4"><i class="grip first"></i>
<svg class="t off"><use href="#s1"/></svg><i class="dd"></i><svg class="t off"><use href="#s2"/></svg><i class="dd"></i><svg class="t off"><use href="#s3"/></svg><i class="dd"></i><svg class="t off"><use href="#s4"/></svg><i class="dd"></i><svg class="t off"><use href="#s5"/></svg><i class="dd"></i><i class="grip"></i><svg class="t"><use href="#redx"/></svg><i class="dd"></i></div>

<main class="work">
<aside class="side"><i class="hgrip"></i>
<div><svg><use href="#lv"/></svg></div><div><svg><use href="#lr"/></svg></div><div><svg><use href="#lm"/></svg></div><div><svg><use href="#lc"/></svg></div><div><svg><use href="#lf"/></svg></div><div><svg><use href="#lx"/></svg></div><div><svg><use href="#lp"/></svg><i class="dd"></i></div><div><svg><use href="#lw"/></svg><i class="dd"></i></div><div><svg><use href="#lg"/></svg></div><div><svg><use href="#lh"/></svg><i class="dd"></i></div><div><svg><use href="#shp"/></svg><i class="dd"></i></div>
</aside>
<section class="dock">
<div class="dockhead"><span>Layers</span><svg width="11" height="11" viewBox="0 0 11 11"><rect x=".5" y=".5" width="10" height="10" rx="2" fill="#eee" stroke="#666"/><path d="M4.500 2.500h4v4h-4zM2.500 4.500h4v4h-4z" fill="#eee" stroke="#555" stroke-width=".9"/></svg><svg width="11" height="11" viewBox="0 0 11 11"><rect x=".5" y=".5" width="10" height="10" rx="2" fill="#eee" stroke="#666"/><path d="M3 3l5 5M8 3L3 8" stroke="#555" stroke-width="1.900"/></svg></div>
<div class="docktools"><svg><use href="#style"/></svg><svg><use href="#addg"/></svg><span class="corner"><svg><use href="#eye"/></svg></span><svg><use href="#funnel"/></svg><svg><use href="#epsf"/></svg><i class="dd"></i><svg><use href="#expa"/></svg><svg><use href="#coll"/></svg><svg><use href="#remv"/></svg></div>
<div class="tree"><div class="node"><i class="tri"></i><svg width="14" height="14"><use href="#check"/></svg><svg class="pt" width="13" height="13" viewBox="0 0 13 13" fill="#eee" stroke="#8aa5bd"><circle cx="2" cy="11" r="1.200"/><circle cx="4" cy="4" r="1.200"/><circle cx="11" cy="1.500" r="1.200"/></svg><b>ifn3_plot_coords_23030</b></div></div>
<div class="tabs"><span class="cur">Layers</span><span>Browser</span></div>
</section>
<section class="map"><svg id="plots" width="1534" height="811" viewBox="385 238 1534 811"></svg></section>
</main>

<footer class="status">
<div class="locate"><svg width="13" height="13"><use href="#mag"/></svg><span>Type to locate (⌘K)</span></div>
<label class="l1">Coordinate</label><span class="box coord">479316,4171117</span><svg class="ext" width="16" height="16" viewBox="0 0 16 16"><ellipse cx="8" cy="10" rx="4" ry="5.500" transform="rotate(-35 8 10)" fill="#ccc" stroke="#444" stroke-width="1.200"/><path d="M2 1l11 13M1 5l10 10M14 1L9 6M5 2l3 5M2 9l3 4" stroke="#444" stroke-width="1.300" fill="none"/></svg>
<label class="l2">Scale</label><span class="box scale"><span>1:706972</span><i class="dd"></i></span>
<svg class="lock" width="13" height="16" viewBox="0 0 13 16"><path d="M3 8V4.500a3.500 3.500 0 017 0V8" fill="none" stroke="#777" stroke-width="1.500"/><rect x="1" y="7" width="11" height="8.500" rx="1" fill="#555"/></svg>
<label class="l3">Magnifier</label><span class="spin mg"><span>100%</span><i class="ud"></i></span>
<label class="l4">Rotation</label><span class="spin ro"><span>0,0 °</span><i class="ud"></i></span>
<svg class="rc" width="14" height="14"><use href="#check"/></svg><label class="l5">Render</label>
<svg class="globe" width="15" height="15" viewBox="0 0 15 15" fill="none" stroke="#777" stroke-width=".8"><circle cx="7.500" cy="6.500" r="5.500" fill="#ccc"/><path d="M2 6.500h11M7.500 1v11M3 3.500h9M3 9.500h9M5 1.500c-1.500 4-1.500 7 0 10M10 1.500c1.500 4 1.500 7 0 10M4 14h7"/></svg><label class="l6">EPSG:23030</label>
<svg class="msg" width="17" height="15" viewBox="0 0 17 15"><path d="M8.500.5c10 0 10 11 2 11.500L14 15l-8-3C-2 11-1 .5 8.500.5z" fill="#555"/><circle cx="5" cy="6" r="1.100" fill="#eee"/><circle cx="8.500" cy="6" r="1.100" fill="#eee"/><circle cx="12" cy="6" r="1.100" fill="#eee"/></svg>
</footer>
</div>

<div class="dialog">
<div class="dtitle"><div class="lights"><i class="r-l"></i><i></i><i class="g-l"></i></div><h3>Layer Properties - ifn3_plot_coords_23030 | Symbology</h3></div>
<div class="dbody">
<nav class="pages">
<div class="find"><svg width="13" height="13"><use href="#mag"/></svg></div>
<a><svg><use href="#d1"/></svg>Information</a><a><svg><use href="#d2"/></svg>Source</a><a class="sel"><svg><use href="#style"/></svg>Symbology</a><a><svg><use href="#d4"/></svg>Labels</a><a><svg><use href="#d5"/></svg>Diagrams</a><a><svg><use href="#d6"/></svg>3D View</a><a><svg><use href="#d7"/></svg>Fields</a><a><svg><use href="#d8"/></svg>Attributes Form</a><a><svg><use href="#d9"/></svg>Joins</a><a><svg><use href="#d10"/></svg>Auxiliary Storage</a><a><svg><use href="#d11"/></svg>Actions</a><a><svg><use href="#d12"/></svg>Display</a><a><svg><use href="#d13"/></svg>Rendering</a><a><svg><use href="#eps"/></svg>Variables</a><a><svg><use href="#d15"/></svg>Metadata</a><a><svg><use href="#d16"/></svg>Dependencies</a><a><svg><use href="#d17"/></svg>Legend</a><a><svg><use href="#d18"/></svg>QGIS Server</a><a><svg><use href="#d19"/></svg>Digitizing</a>
</nav>
<i class="splitter"></i>
<div class="panel">
<div class="btn renderer"><svg width="13" height="14" viewBox="0 0 13 14"><path d="M.5.500h10v3H.5z" fill="#0aaad8" stroke="#0648b0"/><path d="M2.500 5.500h10v3h-10z" fill="#0bb35c" stroke="#06602f"/><path d="M.5 10.500h10v3H.5z" fill="#c00" stroke="#700"/></svg><span>Categorized</span><i class="dd"></i></div>
<div class="row v"><label>Value</label><div class="field"><small>123</small><span>Estadillo</span><i class="dd"></i></div><div class="btn e"><svg width="17" height="17"><use href="#eps"/></svg></div></div>
<div class="row s"><label>Symbol</label><div class="btn wide"><i class="dot"></i></div><div class="btn nar"><i class="dd"></i></div></div>
<div class="row c"><label>Color ramp</label><div class="btn wide">Random colors</div><div class="btn nar"><i class="dd"></i></div></div>
<div class="grid"><div class="list"><div class="ghead"><span>Symbol<i class="dd"></i></span><span>Value</span><span>Legend</span></div><div id="rows"></div></div>
<div class="scroll"><i class="up"></i><i class="thumb"></i><i class="track"></i><i class="down"></i></div></div>
<div class="acts"><div class="btn w">Classify</div><div class="btn ic"><svg width="16" height="16" viewBox="0 0 16 16"><path d="M5.500.5h5v5h5v5h-5v5h-5v-5h-5v-5h5z" fill="#fff" stroke="#5b8f50"/><path d="M8 2.500v11M2.500 8h11" stroke="#5b8f50" stroke-width="2"/></svg></div><div class="btn ic"><svg width="16" height="8" viewBox="0 0 16 8"><path d="M1 1h14v5.500H1z" fill="#fff" stroke="#e33"/><path d="M3 3.700h10" stroke="#e33" stroke-width="2"/></svg></div><div class="btn w">Delete All</div><div class="btn w adv">Advanced<i class="dd sm"></i></div></div>
<div class="lrend"><i class="tri"></i><b>Layer Rendering</b></div>
<div class="acts last"><div class="btn w">Help</div><div class="btn w sty">Style<i class="dd sm"></i></div><div class="btn w">Apply</div><div class="btn w cancel">Cancel</div><div class="btn w ok">OK</div></div>
</div>
</div>
</div>
<svg class="pointer" width="14" height="20" viewBox="0 0 14 20"><path d="M1 1v14.500l3.300-3 2.300 5.500 2.500-1-2.300-5.400h4.700z" fill="#000" stroke="#fff" stroke-width="1.100"/></svg>
<script src="app.js"></script>
</body>
</html>
```
FILE: styles.css
```css
* { box-sizing: border-box; }
body { margin: 0; width: 1920px; height: 1080px; overflow: hidden; background: #000; color: #222; font: 13px/16px Inter, "Noto Sans", sans-serif; display: flex; flex-direction: column; position: relative; }
i { font-style: normal; display: block; }
h1, h2, h3 { margin: 0; }
.defs { position: absolute; }
svg { display: block; flex: none; overflow: visible; }
.menubar { height: 24px; flex: none; background: #262626; color: #eee; display: flex; justify-content: space-between; font-weight: 500; font-size: 12.500px; }
.menus { display: grid; grid-template-columns: 53px 53px 63px 44.500px 49.500px 54.500px 70.500px 65px 60px 59px 78.600px 47.400px 53px 87px 69px 40px; align-items: center; white-space: nowrap; }
.menus b { font-weight: 700; letter-spacing: .2px; }
.apple { padding-left: 19px; }
.tray { display: grid; grid-template-columns: 38px 37px 32px 65px 38px 27px 47px 40px 41px 35px 34px 34px 30px 8px 136px; justify-items: center; align-items: center; width: 642px; }
.tray .fan { justify-self: start; padding-left: 9px; display: flex; gap: 3px; align-items: center; }
.tray .clock { grid-column: 15; justify-self: start; white-space: pre; font-size: 12.800px; }
.kbd { border: 1px solid #eee; border-radius: 3px; width: 22px; height: 16px; line-height: 14px; text-align: center; font-size: 12px; }
.lt { color: #eee; }
.window { margin-top: 1px; height: 1055px; background: #ececec; border-radius: 10px; overflow: hidden; display: flex; flex-direction: column; }
.titlebar { height: 56px; flex: none; background: #eee; text-align: center; color: #3f3f3f; display: grid; grid-template: 29px 27px / 1fr; position: relative; }
.titlebar h1 { font-size: 13px; line-height: 28px; font-weight: 700; letter-spacing: .15px; }
.titlebar h2 { font-size: 11px; line-height: 26px; font-weight: 400; letter-spacing: .12px; }
.lights { display: flex; gap: 8px; }
.lights i { width: 12px; height: 12px; border-radius: 6px; background: #d2d2d2; border: 1px solid #bcbcbc; }
.titlebar .lights { position: absolute; left: 8px; top: 8px; }
.lights .r-l { background: #fc5b57; border-color: #e24641; }
.lights .g-l { background: #27c840; border-color: #1ba82f; }
.bar { height: 39px; flex: none; border-top: 1px solid #b2b2b2; background: linear-gradient(#f5f5f5, #e9e9e9); display: flex; align-items: center; }
.b1 { height: 38px; border-top-color: #cfcfcf; padding-bottom: 1px; }
.b4 { border-bottom: 1px solid #b2b2b2; }
.t { width: 33px; height: 24px; padding: 0 4.500px; }
.off { opacity: .36; filter: grayscale(.6); }
.grip { width: 16px; height: 20px; flex: none; background: radial-gradient(circle at 1px 1px, #b0b0b0 .7px, transparent 1px) 9px 0 / 2.500px 3px; background-clip: content-box; padding: 0 3px 0 9px; }
.grip.first { width: 12.500px; padding-left: 5px; padding-right: 4px; }
.on { width: 33px; height: 31px; background: #d9d9d9; border: 1px solid #a9a9a9; border-radius: 2px; display: flex; align-items: center; justify-content: center; }
.on .big { width: 24px; height: 26px; }
.dd { width: 12px; flex: none; display: flex; justify-content: center; }
.dd::before { content: ""; width: 0; border: 4px solid transparent; border-top: 5px solid #4a4a4a; border-bottom: 0; }
.bar .dd::before, .side .dd::before, .docktools .dd::before { margin-left: -1px; border-width: 5px 3.500px 0; }
.dd.sm::before { border-width: 4px 2.500px 0; }
.sep { width: 1px; height: 28px; background: #ccc; margin: 0 2.500px; }
.corner { position: relative; flex: none; }
.corner::after { content: ""; position: absolute; right: 3px; bottom: -1px; border: 3px solid transparent; border-top: 4px solid #444; border-bottom: 0; }
.snap { display: flex; align-items: center; margin-left: auto; margin-right: 176px; width: 426px; }
.spin, .box, .combo { height: 22px; background: #fff; border: 1px solid #a2a2a2; border-radius: 2px; display: flex; align-items: center; justify-content: space-between; padding-left: 4px; flex: none; }
.ud { width: 14px; height: 100%; border-left: 1px solid #bbb; background: #f3f3f3; display: flex; flex-direction: column; justify-content: center; gap: 5px; align-items: center; }
.ud::before { content: ""; border: 3.500px solid transparent; border-bottom: 4px solid #444; border-top: 0; }
.ud::after { content: ""; border: 3.500px solid transparent; border-top: 4px solid #444; border-bottom: 0; }
.dim { color: #999; font-size: 12.500px; }
.spin.dim { width: 98px; height: 22px; }
.combo.dim { width: 100px; height: 24px; margin-left: 1px; margin-right: 1px; background: #f0f0f0; border-color: #bbb; padding-right: 4px; font-size: 13px; }
.combo.dim .dd::before { border-top-color: #aaa; }
.work { display: flex; height: 814px; flex: none; }
.side { width: 53px; flex: none; border-right: 2px solid #b4b4b4; background: linear-gradient(90deg, #f5f5f5, #e9e9e9); padding-top: 6px; }
.hgrip { height: 5px; width: 17px; margin: 0 0 2px 19px; background: radial-gradient(circle at 1px 1px, #c2c2c2 .6px, transparent 1px) 0 0 / 3px 3px; }
.side div { height: 32px; display: flex; align-items: center; padding-left: 8px; }
.side svg { width: 24px; height: 24px; }
.side .dd { margin-left: 4px; }
.dock { width: 325px; flex: none; margin-right: 6px; display: flex; flex-direction: column; }
.dockhead { height: 18px; margin-top: 2px; display: flex; align-items: center; gap: 3px; padding: 0 2px 0 3px; font-size: 11.500px; letter-spacing: .1px; }
.dockhead span { margin-right: auto; }
.docktools { height: 31px; display: flex; align-items: center; padding: 0 0 1px 7px; gap: 9px; }
.docktools svg { width: 16px; height: 16px; }
.docktools .dd { margin: 0 -2px 0 -6px; }
.docktools .corner::after { right: -4px; bottom: -1px; }
.tree { height: 735px; border: 1px solid #b4b4b4; border-left: 0; background: #fff; }
.node { height: 18px; background: #dcdcdc; display: flex; align-items: center; padding-left: 8px; color: #000; }
.tri { border: 4px solid transparent; border-left: 5px solid #444; border-right: 0; }
.node .tri { margin-right: 10px; }
.node .pt { margin: 0 7px 0 8px; }
.node b { text-decoration: underline; font-size: 13px; letter-spacing: .4px; }
.tabs { display: flex; align-items: flex-start; margin-top: 1px; border-top: 1px solid #b4b4b4; margin-left: -1px; }
.tabs span { width: 73px; height: 24px; line-height: 23px; text-align: center; border: 1px solid #a9a9a9; border-top: 0; border-radius: 0 0 3px 3px; background: #dadada; font-size: 12.500px; }
.tabs .cur { width: 65px; height: 26px; line-height: 26px; background: #f3f3f3; border-right: 0; padding-right: 2px; }
.map { flex: 1; border: 1px solid #b4b4b4; margin-top: 1px; background: #fff; }
.status { flex: none; height: 30px; display: flex; align-items: center; padding: 1px 0 0 4px; font-size: 11.500px; letter-spacing: -.1px; color: #111; }
.locate { width: 216px; height: 24px; border: 1px solid #a2a2a2; border-radius: 3px; background: #fff; display: flex; align-items: center; gap: 8px; padding-left: 8px; color: #858585; font-size: 12.500px; letter-spacing: .1px; margin-right: 822px; }
.status label { white-space: nowrap; }
.box, .spin { height: 24px; }
.l1 { width: 61px; }
.box.coord { width: 110px; justify-content: center; padding: 0; }
.ext { margin: 0 13px 0 5px; }
.l2 { width: 32px; }
.box.scale { width: 94px; }
.scale .dd { width: 21px; height: 100%; align-items: center; border-left: 1px solid #bbb; background: #f3f3f3; }
.lock { margin: 0 8px 0 11px; }
.l3 { width: 53px; }
.mg { width: 97px; margin-right: 9px; }
.l4 { width: 53px; }
.ro { width: 93px; margin-right: 6px; }
.rc { margin-right: 5px; }
.l5 { width: 53px; }
.globe { margin: 0 2px 0 1px; }
.l6 { width: 91px; }
.dialog { position: absolute; left: 449px; top: 120px; width: 825px; height: 758px; border-radius: 10px; background: #ebebeb; box-shadow: 0 0 1px 1px rgba(0,0,0,.22), 0 20px 50px rgba(0,0,0,.5), 0 0 30px rgba(0,0,0,.1); color: #111; }
.dtitle { height: 29px; border-bottom: 1px solid #c8c8c8; border-radius: 10px 10px 0 0; background: #eee; display: flex; align-items: center; padding-left: 8px; }
.dtitle h3 { width: 825px; margin-left: -60px; text-align: center; font-size: 13px; font-weight: 700; color: #424242; letter-spacing: .18px; }
.dbody { display: flex; height: 729px; }
.pages { width: 245px; flex: none; background: #5c5c5c; color: #fff; border-radius: 0 0 0 10px; }
.find { height: 24px; background: #fff; border: 1px solid #6f97c9; border-top-color: #4a6f9f; margin: -1px 0 6px 1px; display: flex; align-items: center; padding-left: 7px; color: #888; }
.pages a { height: 36px; display: flex; align-items: center; gap: 8px; padding: 1px 0 0 5px; font-size: 13px; letter-spacing: -.03px; }
.pages svg { width: 24px; height: 24px; }
.find svg { width: 13px; height: 13px; }
.pages .sel { background: #ebebeb; color: #000; padding-left: 8px; }
.sel svg { opacity: .7; }
.splitter { width: 4px; height: 20px; margin-top: 350px; background: radial-gradient(circle at 1px 1px, #b0b0b0 .7px, transparent 1px) 1px 0 / 4px 3px; }
.panel { width: 573px; padding-top: 2px; }
.btn { border: 1px solid #a5a5a5; border-radius: 3px; background: linear-gradient(#fefefe, #ececec); display: flex; align-items: center; justify-content: center; height: 24px; padding-top: 1px; }
.renderer { justify-content: flex-start; padding: 1px 4px 0 7px; color: #000; gap: 4px; }
.renderer .dd { margin-left: auto; }
.row { display: flex; align-items: center; }
.row label { width: 74px; flex: none; color: #000; padding-top: 1px; }
.v { margin-top: 6px; height: 24px; }
.field { width: 469px; height: 24px; border: 1px solid #a5a5a5; border-radius: 3px; background: #fff; display: flex; align-items: center; padding-left: 4px; color: #000; }
.field small { font: 9.500px/12px "DejaVu Sans", sans-serif; width: 16px; overflow: hidden; color: #444; letter-spacing: -.5px; margin-right: 3px; }
.field .dd { margin-left: auto; width: 20px; height: 100%; align-items: center; border-left: 1px solid #b5b5b5; }
.field .dd::before { margin-left: -1px; }
.e { width: 24px; margin-left: 6px; padding: 0 1px 0 0; }
.s { margin-top: 6px; height: 22px; }
.s .btn { height: 22px; padding-top: 0; }
.c { margin-top: 6px; height: 28px; }
.c .btn { height: 28px; }
.wide { width: 487px; }
.nar { width: 12px; }
.dot { width: 7px; height: 7px; border-radius: 4px; background: #9272b4; border: 1px solid #333; }
.grid { margin-top: 6px; height: 518px; border: 1px solid #b0b0b0; background: #fff; display: flex; overflow: hidden; }
.list { flex: 1; height: 516px; overflow: hidden; }
.ghead { height: 17px; border-bottom: 1px solid #b0b0b0; background: linear-gradient(#fcfcfc, #e8e8e8); display: grid; grid-template-columns: 65px 55px 1fr; font-size: 11.500px; line-height: 18px; }
.ghead span { padding-left: 2px; border-left: 1px solid #c2c2c2; display: flex; letter-spacing: .08px; height: 16px; }
.ghead span:first-child { border: 0; }
.ghead .dd { margin: 5px 1px 0 auto; }
.r { height: 18px; display: grid; grid-template-columns: 24px 42px 55px 1fr; align-items: center; padding-left: 3px; font-size: 13px; line-height: 18px; color: #222; }
.scroll { width: 14px; border-left: 1px solid #b0b0b0; display: flex; flex-direction: column; flex: none; }
.up, .down { height: 14px; background: #f5f5f5; display: flex; align-items: center; justify-content: center; }
.up::before { content: ""; border: 4px solid transparent; border-bottom: 4px solid #444; border-top: 0; }
.down::before { content: ""; border: 4px solid transparent; border-top: 4px solid #444; border-bottom: 0; }
.thumb { height: 27px; background: #fbfbfb; border: solid #b9b9b9; border-width: 1px 0; }
.track { flex: 1; background: #e1e1e1; border-bottom: 1px solid #b9b9b9; }
.acts { display: flex; gap: 6px; margin-top: 6px; }
.w { width: 80px; }
.ic { width: 28px; padding: 0; }
.adv { margin-left: auto; letter-spacing: -.2px; }
.adv .dd { margin: 0 -3px 0 0; }
.sty { justify-content: space-between; padding-left: 17px; }
.lrend { height: 30px; display: flex; align-items: center; padding: 0 0 0 5px; color: #000; letter-spacing: .1px; }
.lrend .tri { border-width: 6px 0 6px 7px; margin-right: 10px; }
.last { margin-top: 0; }
.cancel { margin-left: auto; }
.ok { border-color: #4a90d9; background: linear-gradient(#fcfdfe, #e3ebf3); }
.pointer { position: absolute; left: 1244px; top: 135px; }
```
FILE: app.js
```js
// Category rows: value and marker colour.
const categories = [[1,'#1285e6'],[2,'#1bc0d3'],[3,'#e312dc'],[4,'#e0913c'],[5,'#5470e0'],[6,'#6fc71c'],[7,'#ccb83e'],[8,'#ce1d2c'],[9,'#d3e55a'],[10,'#cf62dc'],[11,'#e474cd'],[12,'#dc942b'],[13,'#57d8e2'],[14,'#62abc4'],[15,'#8410cc'],[16,'#d948d3'],[17,'#a94ddb'],[18,'#80cb50'],[19,'#9312dc'],[20,'#dc5a4e'],[21,'#8377d6'],[23,'#16cc8c'],[24,'#e27c6c'],[25,'#3fbd5c'],[26,'#ca1c78'],[27,'#9176e2'],[28,'#4fcb3f'],[29,'#b062d2']];
document.getElementById('rows').innerHTML = categories.map(([n, c]) =>
  `<div class="r"><svg width="14" height="14"><use href="#check"/></svg><svg width="8" height="8" viewBox="0 0 8 8"><circle cx="4" cy="4" r="3" fill="${c}" stroke="#333" stroke-width="1.100"/></svg><span>${n}</span><span>${n}</span></div>`).join('');

// Plot markers, grouped in rows: y, then pairs of x and colour, in thirds of a pixel.
const south = `57 105 5a0 129 b55 213 3a4 237 182 261 828 513 b80 585 a80 805 63a 860 63b 836 63b 1068 a80 1137 22a 1200 3a8 1223 c23 1236 6b3 1308 7a3
69 81 4a5 177 b5a 201 b28 213 2a5 225 5b3 237 a42 249 639 261 a28 417 83a 477 71a 501 51a 525 3a5 537 8a4 549 b28 573 2a8 585 2a6 597 28a 621 4b2 813 b28 825 63a 837 638 852 53b 948 3a5 1080 a65 1104 6a4 1140 b32 1152 a80 1188 4a8 1200 7a3
81 189 b63 213 a92 237 aa0 261 0aa 549 b28 573 2a8 597 18a 829 b2a 840 a2a 852 53b 1008 34a 1128 3b3
93 117 a58 129 11a 285 75a 501 57a 573 2a8 813 4a7 840 c32 936 63a 970 5b3 984 bb0 1008 47a 1080 a23 1104 3a7
105 129 a58 225 61a 261 28b 597 2a5 621 8a4 633 8a4 825 57a 864 56b 945 11a 1032 a80 1092 63b 1104 7a4 1116 93b 1140 11a 1200 0b6
117 153 a80 273 48b 441 a80 573 4a9 645 93c 765 1b6 840 aa4 885 b73 936 2a4 1056 b65 1068 3b6 1080 51b 1104 aa5 1152 5b4 1368 41b
129 297 c66 369 3a9 753 aa0 876 bb0 909 15b 924 b5a 936 b62 948 3a7 960 2ab 972 b33 1020 28b 1032 2a5 1044 c36 1056 3a8 1068 5b4
141 237 2a7 453 c66 477 56b 645 2b2 801 dd4 840 d30 864 27b 888 7c4 909 15b 936 2a8 960 c74 1020 28b 1092 57b 1116 d28
153 225 28d 261 2b9 273 c54 285 d53 321 d87 345 3b9 417 b47 489 92c 585 2b8 597 2b9 657 4ab 849 18c 972 bb5 1008 c0b 1188 7b4
165 237 0ca 273 1ca 285 61d 297 c5a 453 36c 477 57c 489 70c 501 4d1 525 63c 549 c14 585 3ba 597 4ba 633 3cb 645 4ba 912 3ac 996 da2 1020 c0b
177 297 89e 309 e0b 453 c77 477 63b 501 36c 525 d42 537 da2 549 cb5 561 7c5 585 ca3 621 2ca 645 3ca 657 d31 669 e41 1008 e6b 1020 d0c 1032 6c5 1164 da1
189 285 c67 417 9c2 429 aa3 441 bb0 477 77c 501 dd3 537 8d8 573 da2 585 ba3 597 cb6 621 1da 633 e40 645 d31 657 d12 669 e52 681 d02 705 d6b 717 4ab 729 26c 765 59c 777 6ac 1020 e71 1200 6dd 1260 dd3
201 417 ac2 429 c45 465 25d 477 22d 489 00d 501 aca 525 ea9 549 3cb 585 bb2 621 1ad 645 13d 669 c95 693 90d 717 2ca 729 16c 741 c62 1272 8c1
213 417 b0d 453 b0d 477 9c6 501 3cc 525 4d9 537 a0d 549 6c8 573 e60 597 b0d 609 d0b 621 2ad 645 1d9 669 d56 681 a1d 705 1d3 729 d53 753 9c4 801 e64 1008 4ba 1188 1ca 1308 10d
225 405 83d 417 76c 429 86d 441 96e 453 a6e 465 c4c 489 dd7 513 8e8 537 e3e 573 83e 597 4d6 621 8d8 633 9d5 657 e5b 681 84e 705 d85 717 c6b 729 b45 789 6d3 825 5dd 936 8e9 1008 84d 1020 c6d 1152 2ad 1224 77d 1248 26d
237 405 9e1 417 8d9 441 9d1 453 3d8 465 9e2 477 cd1 501 d3c 513 5d9 525 22e 585 93e 621 7d7 669 e2a 693 7c2 705 d33 777 5ca 789 4cc 813 4d2 876 6e1 885 3ed 897 4dd 909 7ca 1020 7e9 1032 bd7
249 453 f75 477 5e4 501 c3c 525 d3c 561 d4b 597 8e1 609 22e 669 ea2 693 36d 705 e42 717 c0c 729 d82 765 3c9 777 4cb 840 8e1 936 84d 960 8e1 984 17d 1080 71c 1140 f58 1236 b7d
261 585 1d7 621 60d 645 17e 657 dc3 669 e11 693 bd2 717 d55 729 54b 825 1d6 885 dd6 900 1ec 912 7ea 945 d63 1272 3de
273 609 26c 621 f44 681 f79 693 d99 705 d63 717 c96 729 d52 885 f77 897 1ec 912 84e 945 6db 1032 6e2 1068 ea1 1248 6dd
276 525 ae1
285 693 b7e 717 ad2 729 3bd 741 c13 801 7ae 876 d0d 909 e31 972 f15 1044 8ac 1080 ee1 1272 5d5
297 585 1cb 669 d0b 693 1e3 741 ec8 801 6be 861 de2 900 d0b 912 d0b 948 69d 1020 da4 1056 e41
309 669 fb8 765 1e8 885 e56 897 e10 909 e31 924 6d1 1056 1c2
321 681 e84 717 d31 753 f86 777 d77 900 69d 936 1e1
333 621 3de 729 f99 984 e93
357 765 5d6 849 c52 861 cb2 933 de4
369 657 7c6 825 5cd 840 1d9 852 9e7 924 22c 936 1ad 948 61c 1068 4c2
381 921 31c 1104 9e4
393 1068 7db 1128 a3d
405 549 d28 936 e5e
417 561 6ad 924 e84`;
const east = `90 99 4a8 111 4a8 132 3b3 144 d02 159 7b0 171 e6b
102 111 b46 123 53b 144 b04 183 55d
114 120 84b 192 57e
126 120 2b8
138 101 32a 144 1bc
150 120 d28
162 108 e60 120 64b
174 108 b0b
186 120 59b
198 240 90e
210 108 26c
222 132 4c8 231 5c4
234 267 b3e
366 144 d20
378 132 cc3 180 5bd
390 144 e5b
402 168 e92
426 120 34c 156 c35 183 8e8
450 192 c4c
462 123 a5b
546 120 1a8
558 156 c60
570 108 d57 120 37b 132 dc0 156 1e1
582 123 d91 132 cc2 144 9c6
597 108 bb5 144 d0d 156 5bd 168 d6b
609 132 11d 183 cc0
669 120 23a
693 108 75b
705 120 d0c
717 108 91c
730 123 8c4
741 108 cc6 132 8e8
750 100 a22`;
const marks = (text, ox, oy) => text.split('\n').map(line => {
  const [y, ...p] = line.split(' ');
  let s = '';
  for (let k = 0; k < p.length; k += 2) s += `<circle cx="${(ox + p[k] / 3).toFixed(1)}" cy="${(oy + y / 3).toFixed(1)}" r="2.700" fill="#${p[k + 1]}"/>`;
  return s;
}).join('');
document.getElementById('plots').innerHTML = `<g stroke="#333" stroke-width="1">${marks(south, 600, 860)}${marks(east, 1240, 400)}</g>`;
```
